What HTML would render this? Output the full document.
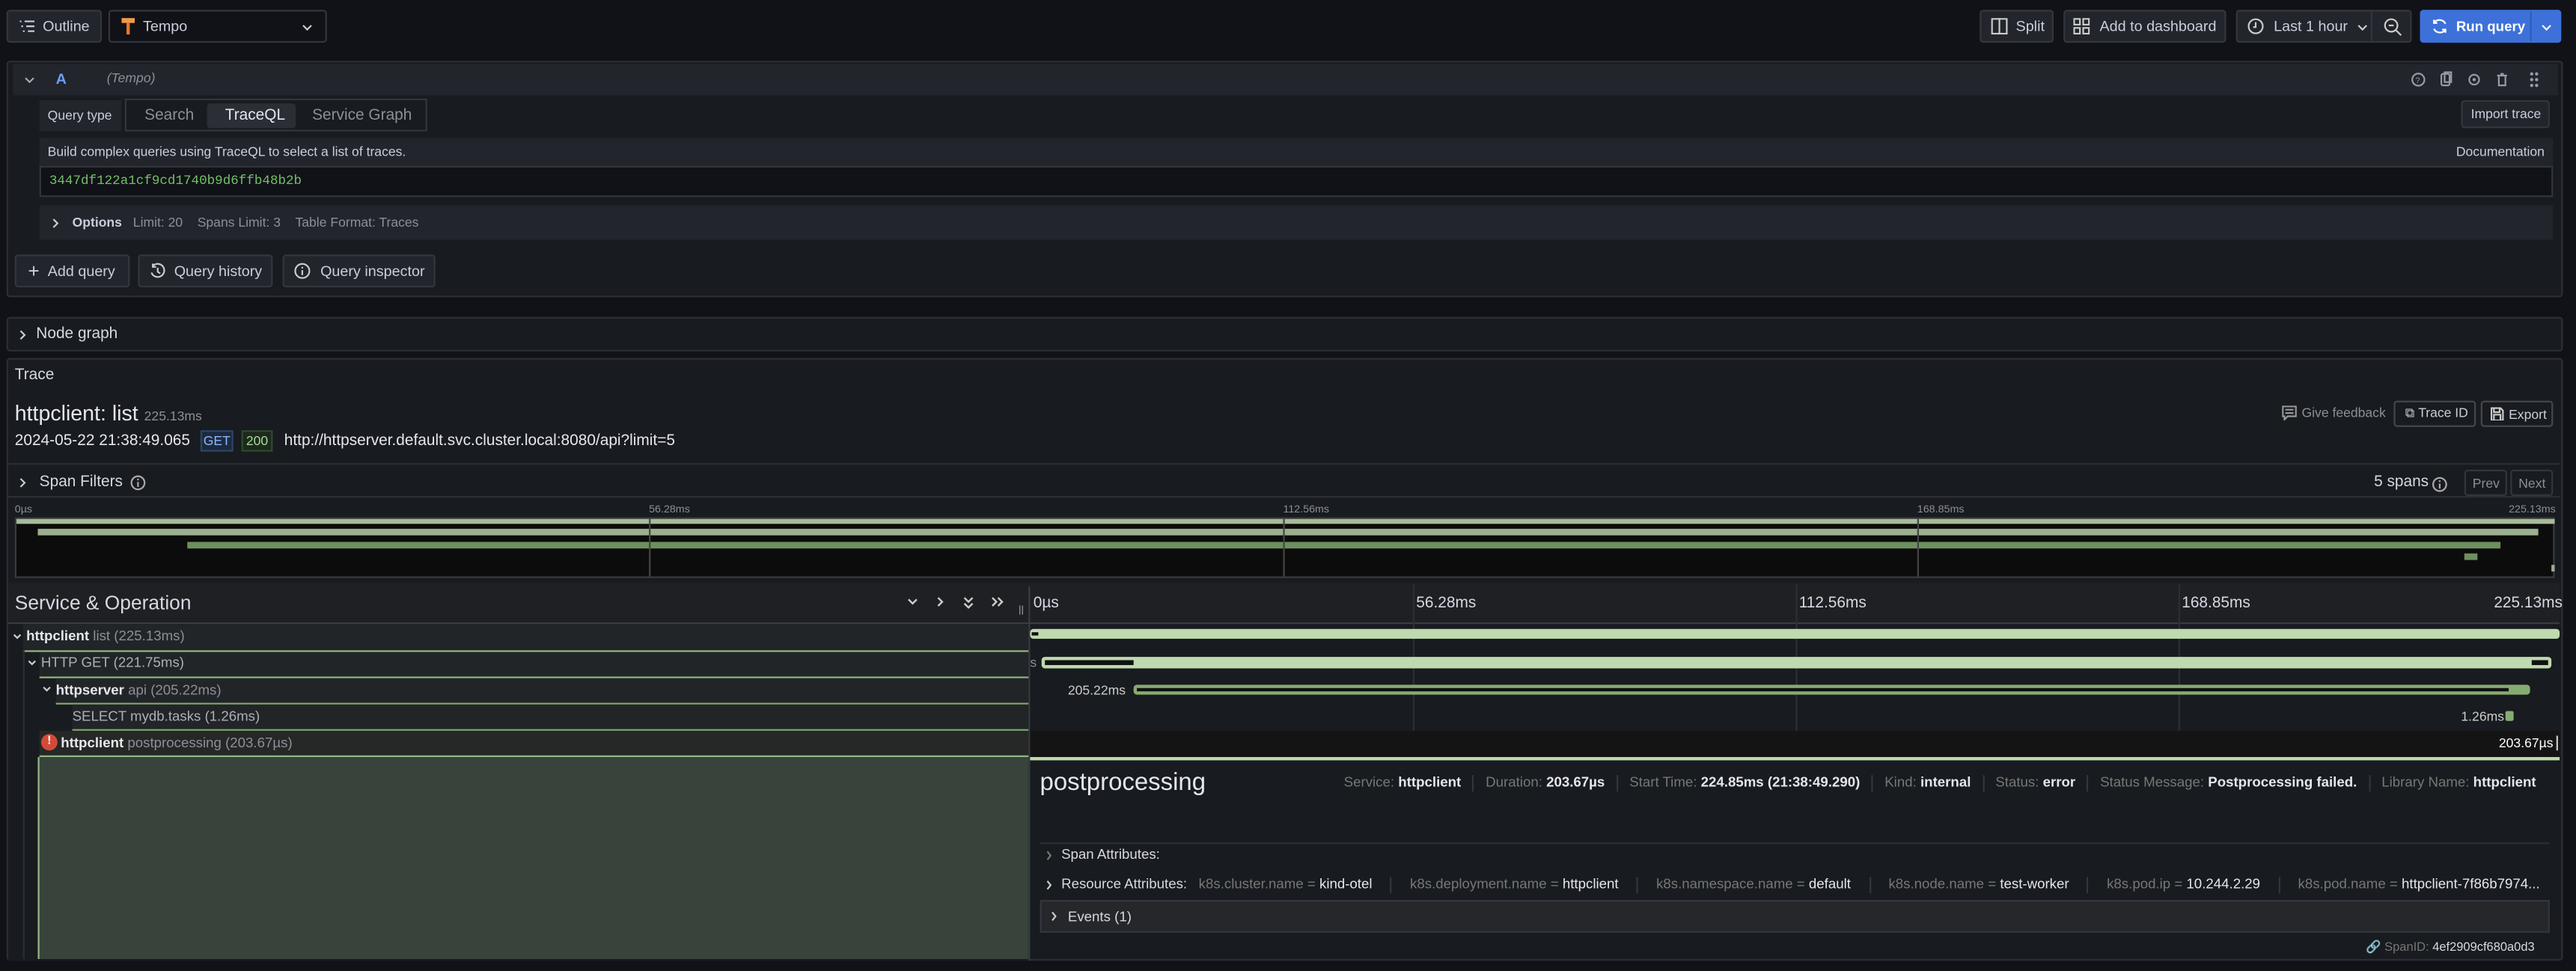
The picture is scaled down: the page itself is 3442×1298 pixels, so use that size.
<!DOCTYPE html>
<html><head><meta charset="utf-8">
<style>
html,body{margin:0;padding:0;background:#111217;width:3442px;height:1298px;overflow:hidden}
#w{position:absolute;left:0;top:0;width:1568px;height:591px;transform:scale(2.1952);transform-origin:0 0;font-family:"Liberation Sans",sans-serif;color:#ccccdc;font-size:9px}
.a{position:absolute;white-space:nowrap}
.btn{position:absolute;background:#22252b;border:1px solid #33363d;border-radius:2px;box-sizing:border-box;color:#ccccdc;font-size:9px;display:flex;align-items:center}
.panel{position:absolute;background:#181b1f;border:1px solid #2c2e33;box-sizing:border-box;border-radius:2px}
.row{position:absolute;background:#22252b}
.dim{color:#8e8e99}
.b{font-weight:bold;color:#e6e6ee}
.tick{position:absolute;width:1px;background:#2c2e33}
.bar{position:absolute;background:#bedaae;border-radius:2px}
.sep{display:inline-block;width:1px;height:10px;background:#33363d;vertical-align:middle;margin:0 7px}
.sep2{display:inline-block;width:1px;height:10px;background:#33363d;vertical-align:middle;margin:0 11px}
</style></head><body><div id="w">

<!-- top bar -->
<div class="btn" style="left:4px;top:6px;width:58px;height:20px;padding-left:7px">
<svg width="9" height="8" viewBox="0 0 9 8" style="margin-right:5px"><path d="M0 1h1M3 1h6M1 4h1M4 4h5M2 7h1M5 7h4" stroke="#ccccdc" stroke-width="1"/></svg>Outline</div>
<div class="btn" style="left:66px;top:6px;width:133px;height:20px;padding-left:6px;background:#111217">
<svg width="10" height="12" viewBox="0 0 10 12" style="margin-right:4px"><rect x="1" y="1" width="8" height="3" fill="#f2994a"/><rect x="4" y="4" width="2" height="7" fill="#e8772e"/></svg>Tempo
<svg class="a" style="right:8px;top:8px" width="6" height="4"><path d="M.5 .5l2.5 2.5 2.5-2.5" stroke="#ccc" fill="none"/></svg></div>

<div class="btn" style="left:1205px;top:6px;width:45px;height:20px;padding-left:6px"><svg width="10" height="10" style="margin-right:5px"><rect x="0.5" y="0.5" width="9" height="9" fill="none" stroke="#ccc"/><path d="M5 0v10" stroke="#ccc"/></svg>Split</div>
<div class="btn" style="left:1256px;top:6px;width:99px;height:20px;padding-left:5px"><svg width="10" height="10" style="margin-right:6px"><rect x=".5" y=".5" width="3.5" height="3.5" fill="none" stroke="#ccc"/><rect x="6" y=".5" width="3.5" height="3.5" fill="none" stroke="#ccc"/><rect x=".5" y="6" width="3.5" height="3.5" fill="none" stroke="#ccc"/><rect x="6" y="6" width="3.5" height="3.5" fill="none" stroke="#ccc"/></svg>Add to dashboard</div>
<div class="btn" style="left:1361px;top:6px;width:107px;height:20px;padding-left:6px"><svg width="10" height="10" style="margin-right:6px"><circle cx="5" cy="5" r="4.3" fill="none" stroke="#ccc"/><path d="M5 2.5v3h-1.5" stroke="#ccc" fill="none"/></svg>Last 1 hour
<svg class="a" style="left:73px;top:8px" width="6" height="4"><path d="M.5 .5l2.5 2.5 2.5-2.5" stroke="#ccc" fill="none"/></svg>
<span class="a" style="left:81px;top:0;width:1px;height:18px;background:#33363d"></span>
<svg class="a" style="left:89px;top:4px" width="11" height="11"><circle cx="4.5" cy="4.5" r="3.8" fill="none" stroke="#ccc"/><path d="M3 4.5h3M7.5 7.5l3 3" stroke="#ccc"/></svg></div>
<div class="btn" style="left:1473px;top:6px;width:86px;height:20px;background:#3d71d9;border-color:#3d71d9;color:#fff;padding-left:6px;font-weight:bold;font-size:8.5px"><svg width="10" height="10" style="margin-right:5px"><path d="M8.5 3.5A4 4 0 0 0 1.5 3M1.5 6.5A4 4 0 0 0 8.5 7M1.5 1v2h2M8.5 9V7h-2" stroke="#fff" fill="none"/></svg>Run query<span class="a" style="left:66px;top:0;width:1px;height:18px;background:#2f5db8"></span><svg class="a" style="left:73px;top:8px" width="6" height="4"><path d="M.5 .5l2.5 2.5 2.5-2.5" stroke="#fff" fill="none"/></svg></div>

<!-- query panel -->
<div class="panel" style="left:4px;top:37px;width:1556px;height:144px;border-color:#2c2e33"></div>
<div class="row" style="left:8px;top:39px;width:1549px;height:19px"></div>
<svg class="a" style="left:15px;top:47px" width="6" height="4"><path d="M.5 .5l2.5 2.5 2.5-2.5" stroke="#aaa" fill="none"/></svg>
<span class="a" style="left:34px;top:43px;color:#6e9fff;font-weight:bold">A</span>
<span class="a dim" style="left:65px;top:43px;font-style:italic;font-size:8px">(Tempo)</span>
<svg class="a" style="left:1467px;top:43px" width="90" height="11" viewBox="0 0 90 11"><circle cx="5" cy="5.5" r="3.7" fill="none" stroke="#9a9aa5"/><text x="3.2" y="7.5" font-size="5" fill="#9a9aa5" font-family="Liberation Sans">?</text><rect x="19" y="2" width="5" height="7" rx="1" fill="none" stroke="#9a9aa5"/><rect x="21" y="1" width="4" height="6" fill="none" stroke="#9a9aa5"/><circle cx="39" cy="5.5" r="3" fill="none" stroke="#9a9aa5"/><circle cx="39" cy="5.5" r="1" fill="#9a9aa5"/><path d="M53 3h6M55 2h2M54 3v6h4v-6" fill="none" stroke="#9a9aa5"/><g fill="#9a9aa5"><circle cx="74" cy="2" r="1"/><circle cx="77" cy="2" r="1"/><circle cx="74" cy="5.5" r="1"/><circle cx="77" cy="5.5" r="1"/><circle cx="74" cy="9" r="1"/><circle cx="77" cy="9" r="1"/></g></svg>

<div class="row" style="left:24px;top:61px;width:50px;height:19px"></div>
<span class="a" style="left:29px;top:66px;font-size:8px;color:#ccccdc">Query type</span>
<div class="a" style="left:76px;top:60px;width:184px;height:20px;border:1px solid #33363d;box-sizing:border-box"></div>
<div class="a" style="left:126px;top:63px;width:54px;height:15px;background:#2b2e35;border-radius:2px"></div>
<span class="a dim" style="left:88px;top:65px;font-size:9.5px">Search</span>
<span class="a" style="left:137px;top:65px;font-size:9.5px;color:#e6e6ee">TraceQL</span>
<span class="a dim" style="left:190px;top:65px;font-size:9.5px">Service Graph</span>
<div class="btn" style="left:1498px;top:61px;width:54px;height:17px;padding-left:5px;font-size:8px">Import trace</div>

<div class="row" style="left:24px;top:84px;width:1530px;height:17px"></div>
<span class="a" style="left:29px;top:88px;font-size:8px">Build complex queries using TraceQL to select a list of traces.</span>
<span class="a" style="left:1495px;top:88px;font-size:8px">Documentation</span>
<div class="a" style="left:24px;top:101px;width:1530px;height:19px;background:#111217;border:1px solid #33363d;box-sizing:border-box"></div>
<span class="a" style="left:30px;top:106px;font-family:'Liberation Mono',monospace;font-size:8px;color:#73bf69">3447df122a1cf9cd1740b9d6ffb48b2b</span>

<div class="row" style="left:24px;top:125px;width:1530px;height:21px"></div>
<svg class="a" style="left:32px;top:133px" width="4" height="6"><path d="M.5 .5l2.5 2.5-2.5 2.5" stroke="#ccc" fill="none"/></svg>
<span class="a" style="left:44px;top:131px;font-size:8px;font-weight:bold">Options</span>
<span class="a dim" style="left:81px;top:131px;font-size:8px">Limit: 20&nbsp;&nbsp;&nbsp;&nbsp;Spans Limit: 3&nbsp;&nbsp;&nbsp;&nbsp;Table Format: Traces</span>

<div class="btn" style="left:9px;top:155px;width:70px;height:20px;padding-left:7px"><span style="font-size:12px;margin-right:5px">+</span>Add query</div>
<div class="btn" style="left:84px;top:155px;width:82px;height:20px;padding-left:6px"><svg width="10" height="10" style="margin-right:5px"><path d="M2 2A4 4 0 1 1 1.2 6M2 .5V2.5H4M5 3v2.5l1.5 1" stroke="#ccc" fill="none"/></svg>Query history</div>
<div class="btn" style="left:172px;top:155px;width:93px;height:20px;padding-left:6px"><svg width="10" height="10" style="margin-right:6px"><circle cx="5" cy="5" r="4.3" fill="none" stroke="#ccc"/><path d="M5 4.5v3M5 2.5v1" stroke="#ccc"/></svg>Query inspector</div>

<!-- node graph -->
<div class="panel" style="left:4px;top:193px;width:1556px;height:21px"></div>
<svg class="a" style="left:12px;top:201px" width="4" height="6"><path d="M.5 .5l2.5 2.5-2.5 2.5" stroke="#ccc" fill="none"/></svg>
<span class="a" style="left:22px;top:198px;font-size:9.5px;color:#d8d8e4">Node graph</span>

<!-- trace panel -->
<div class="panel" style="left:4px;top:218px;width:1556px;height:367px"></div>
<span class="a" style="left:9px;top:223px;font-size:9.5px;color:#d8d8e4">Trace</span>
<span class="a" style="left:9px;top:244px;font-size:13px;color:#e6e6ee">httpclient: list <span class="dim" style="font-size:8px">225.13ms</span></span>
<span class="a" style="left:9px;top:263px;font-size:9.5px;color:#e6e6ee">2024-05-22 21:38:49.065</span>
<span class="a" style="left:122px;top:262px;width:20px;height:13px;background:#1d2a3d;border:1px solid #2e4566;box-sizing:border-box;font-size:8px;color:#8ab8ff;text-align:center;line-height:12px">GET</span>
<span class="a" style="left:147px;top:262px;width:19px;height:13px;background:#1c2a1c;border:1px solid #2f4a2f;box-sizing:border-box;font-size:8px;color:#a6d89a;text-align:center;line-height:12px">200</span>
<span class="a" style="left:173px;top:263px;font-size:9.5px;color:#e6e6ee">http://httpserver.default.svc.cluster.local:8080/api?limit=5</span>
<svg class="a" style="left:1389px;top:247px" width="9" height="9"><path d="M.5 .5h8v6h-5l-2 2v-2h-1z M2 2.5h5M2 4.5h5" stroke="#999" fill="none"/></svg>
<span class="a dim" style="left:1401px;top:247px;font-size:8px">Give feedback</span>
<div class="btn" style="left:1457px;top:244px;width:50px;height:16px;padding-left:6px;font-size:8px;background:transparent;border-color:#44474f">⧉&nbsp;Trace ID</div>
<div class="btn" style="left:1510px;top:244px;width:44px;height:16px;padding-left:5px;font-size:8px;background:transparent;border-color:#44474f"><svg width="8" height="8" style="margin-right:3px"><path d="M.5 .5h5.5l1.5 1.5v6h-7z M2 .5v2.5h3.5v-2.5 M2 7.5v-3h4v3" stroke="#ccc" fill="none"/></svg>Export</div>
<div class="a" style="left:5px;top:282px;width:1553px;height:1px;background:#2c2e33"></div>
<svg class="a" style="left:12px;top:291px" width="4" height="6"><path d="M.5 .5l2.5 2.5-2.5 2.5" stroke="#ccc" fill="none"/></svg>
<span class="a" style="left:24px;top:288px;font-size:9.5px;color:#d8d8e4">Span Filters</span>
<svg class="a" style="left:79px;top:289px" width="10" height="10"><circle cx="5" cy="5" r="4" fill="none" stroke="#aaa"/><path d="M5 4.5v3M5 2.5v1" stroke="#aaa"/></svg>
<span class="a" style="left:1445px;top:288px;font-size:9.5px;color:#d8d8e4">5 spans</span>
<svg class="a" style="left:1480px;top:290px" width="10" height="10"><circle cx="5" cy="5" r="4" fill="none" stroke="#aaa"/><path d="M5 4.5v3M5 2.5v1" stroke="#aaa"/></svg>
<div class="btn" style="left:1500px;top:286px;width:26px;height:16px;padding-left:4px;font-size:8px;background:transparent;color:#8e8e99">Prev</div>
<div class="btn" style="left:1528px;top:286px;width:26px;height:16px;padding-left:4px;font-size:8px;background:transparent;color:#8e8e99">Next</div>
<div class="a" style="left:5px;top:302px;width:1553px;height:1px;background:#2c2e33"></div>

<!-- minimap -->
<span class="a dim" style="left:9px;top:307px;font-size:6.5px">0µs</span>
<span class="a dim" style="left:395px;top:307px;font-size:6.5px">56.28ms</span>
<span class="a dim" style="left:781px;top:307px;font-size:6.5px">112.56ms</span>
<span class="a dim" style="left:1167px;top:307px;font-size:6.5px">168.85ms</span>
<span class="a dim" style="left:1527px;top:307px;font-size:6.5px">225.13ms</span>
<div class="a" style="left:9px;top:315px;width:1546px;height:37px;background:#0c0c0c;border:1px solid #3a3c42;box-sizing:border-box"></div>
<div class="a" style="left:10px;top:316px;width:1545px;height:3px;background:#a6bc98"></div>
<div class="a" style="left:23px;top:322px;width:1522px;height:4px;background:#9ab08f"></div>
<div class="a" style="left:114px;top:330px;width:1408px;height:4px;background:#6e8f5e"></div>
<div class="a" style="left:1500px;top:337px;width:8px;height:4px;background:#6e8f5e"></div>
<div class="a" style="left:1553px;top:344px;width:2px;height:4px;background:#9ab08f"></div>
<div class="tick" style="left:395px;top:316px;height:35px;background:#444"></div>
<div class="tick" style="left:781px;top:316px;height:35px;background:#444"></div>
<div class="tick" style="left:1167px;top:316px;height:35px;background:#444"></div>

<!-- span header -->
<div class="a" style="left:5px;top:355px;width:1553px;height:24px;background:#1f2023;border-bottom:1px solid #3a3c42"></div>
<span class="a" style="left:9px;top:360px;font-size:12px;color:#d8d8e4">Service &amp; Operation</span>
<svg class="a" style="left:552px;top:363px" width="62" height="8" viewBox="0 0 62 8"><g stroke="#ccc" fill="none" stroke-width="1.1"><path d="M1 2l2.5 2.5 2.5-2.5"/><path d="M19 1l2.5 2.5-2.5 2.5"/><path d="M35 1l2.5 2.5 2.5-2.5M35 4.5l2.5 2.5 2.5-2.5"/><path d="M52 1l2.5 2.5-2.5 2.5M55.5 1l2.5 2.5-2.5 2.5"/></g></svg>
<span class="a" style="left:620px;top:369px;font-size:6px;color:#aaa">||</span>
<div class="a" style="left:626px;top:357px;width:1px;height:228px;background:#3a3c42"></div>
<span class="a" style="left:629px;top:362px;font-size:9.5px;color:#d8d8e4">0µs</span>
<span class="a" style="left:862px;top:362px;font-size:9.5px;color:#d8d8e4">56.28ms</span>
<span class="a" style="left:1095px;top:362px;font-size:9.5px;color:#d8d8e4">112.56ms</span>
<span class="a" style="left:1328px;top:362px;font-size:9.5px;color:#d8d8e4">168.85ms</span>
<span class="a" style="left:1518px;top:362px;font-size:9.5px;color:#d8d8e4">225.13ms</span>
<div class="tick" style="left:860px;top:356px;height:105px"></div>
<div class="tick" style="left:1093px;top:356px;height:105px"></div>
<div class="tick" style="left:1326px;top:356px;height:105px"></div>

<!-- rows left -->
<div class="a" style="left:5px;top:380px;width:621px;height:205px;background:#181b1f"></div>
<div class="a" style="left:14px;top:380px;width:612px;height:16px;background:#212527"></div>
<div class="a" style="left:14px;top:396px;width:612px;height:1px;background:#96b886"></div>
<div class="a" style="left:24px;top:397px;width:602px;height:15px;background:#212527"></div>
<div class="a" style="left:24px;top:412px;width:602px;height:1px;background:#96b886"></div>
<div class="a" style="left:34px;top:413px;width:592px;height:15px;background:#212527"></div>
<div class="a" style="left:34px;top:428px;width:592px;height:1px;background:#86ab70"></div>
<div class="a" style="left:44px;top:429px;width:582px;height:15px;background:#212527"></div>
<div class="a" style="left:44px;top:444px;width:582px;height:1px;background:#86ab70"></div>
<div class="a" style="left:24px;top:445px;width:602px;height:16px;background:#252826"></div>
<div class="a" style="left:24px;top:460px;width:602px;height:1px;background:#96b886"></div>
<div class="a" style="left:23px;top:461px;width:603px;height:123px;background:#38433b;border-left:1px solid #96b886;box-sizing:border-box"></div>
<div class="a" style="left:14px;top:396px;width:1px;height:188px;background:#2c2e33"></div>
<svg class="a" style="left:8px;top:386px" width="5" height="4"><path d="M.5 .5l2 2 2-2" stroke="#ccc" fill="none"/></svg>
<span class="a" style="left:16px;top:382px;font-size:8.5px"><b style="color:#e6e6ee">httpclient</b> <span class="dim">list (225.13ms)</span></span>
<svg class="a" style="left:17px;top:402px" width="5" height="4"><path d="M.5 .5l2 2 2-2" stroke="#ccc" fill="none"/></svg>
<span class="a dim" style="left:25px;top:398px;font-size:8.5px;color:#aeaeb8">HTTP GET (221.75ms)</span>
<svg class="a" style="left:26px;top:418px" width="5" height="4"><path d="M.5 .5l2 2 2-2" stroke="#ccc" fill="none"/></svg>
<span class="a" style="left:34px;top:415px;font-size:8.5px"><b style="color:#e6e6ee">httpserver</b> <span class="dim">api (205.22ms)</span></span>
<span class="a" style="left:44px;top:431px;font-size:8.5px;color:#aeaeb8">SELECT mydb.tasks (1.26ms)</span>
<span class="a" style="left:25px;top:447px;width:10px;height:10px;border-radius:50%;background:#d44a3a;color:#fff;font-size:7px;text-align:center;line-height:10px;font-weight:bold">!</span>
<span class="a" style="left:37px;top:447px;font-size:8.5px"><b style="color:#e6e6ee">httpclient</b> <span class="dim">postprocessing (203.67µs)</span></span>

<!-- bars -->
<div class="bar" style="left:627px;top:383px;width:931px;height:6px"></div>
<div class="a" style="left:628px;top:385px;width:4px;height:2px;background:#111"></div>
<span class="a dim" style="left:627px;top:399px;font-size:8px">s</span>
<div class="bar" style="left:634px;top:400px;width:919px;height:7px"></div>
<div class="a" style="left:636px;top:402px;width:54px;height:3px;background:#111"></div>
<div class="a" style="left:1541px;top:402px;width:10px;height:3px;background:#111"></div>
<span class="a" style="left:650px;top:416px;font-size:8px;color:#ccc">205.22ms</span>
<div class="bar" style="left:690px;top:417px;width:850px;height:6px;background:#86ab70"></div>
<div class="a" style="left:692px;top:419px;width:835px;height:2px;background:#111"></div>
<span class="a" style="left:1498px;top:432px;font-size:8px;color:#ccc">1.26ms</span>
<div class="a" style="left:1525px;top:433px;width:5px;height:6px;background:#86ab70;border-radius:1px"></div>
<div class="a" style="left:627px;top:445px;width:931px;height:16px;background:#141414"></div>
<span class="a" style="left:1521px;top:448px;font-size:8px;color:#fff">203.67µs</span>
<div class="a" style="left:1556px;top:448px;width:1px;height:9px;background:#ccc"></div>
<div class="a" style="left:627px;top:461px;width:931px;height:2px;background:#bedaae"></div>

<!-- detail -->
<span class="a" style="left:633px;top:468px;font-size:15px;color:#e6e6ee">postprocessing</span>
<span class="a" style="left:818px;top:471px;font-size:8.5px;color:#777"><span>Service: <b style="color:#e6e6ee">httpclient</b></span><span class="sep"></span>Duration: <b style="color:#e6e6ee">203.67µs</b><span class="sep"></span>Start Time: <b style="color:#e6e6ee">224.85ms (21:38:49.290)</b><span class="sep"></span>Kind: <b style="color:#e6e6ee">internal</b><span class="sep"></span>Status: <b style="color:#e6e6ee">error</b><span class="sep"></span>Status Message: <b style="color:#e6e6ee">Postprocessing failed.</b><span class="sep"></span>Library Name: <b style="color:#e6e6ee">httpclient</b></span>
<div class="a" style="left:633px;top:513px;width:919px;height:1px;background:#2c2e33"></div>
<svg class="a" style="left:637px;top:518px" width="4" height="6"><path d="M.5 .5l2 2.5-2 2.5" stroke="#777" fill="none"/></svg>
<span class="a" style="left:646px;top:515px;font-size:8.5px;color:#d8d8e4">Span Attributes:</span>
<svg class="a" style="left:637px;top:536px" width="4" height="6"><path d="M.5 .5l2 2.5-2 2.5" stroke="#ccc" fill="none"/></svg>
<span class="a" style="left:646px;top:533px;font-size:8.5px;color:#777"><span style="color:#d8d8e4">Resource Attributes:</span>&nbsp;&nbsp; k8s.cluster.name = <span style="color:#e6e6ee">kind-otel</span><span class="sep2"></span>k8s.deployment.name = <span style="color:#e6e6ee">httpclient</span><span class="sep2"></span>k8s.namespace.name = <span style="color:#e6e6ee">default</span><span class="sep2"></span>k8s.node.name = <span style="color:#e6e6ee">test-worker</span><span class="sep2"></span>k8s.pod.ip = <span style="color:#e6e6ee">10.244.2.29</span><span class="sep2"></span>k8s.pod.name = <span style="color:#e6e6ee">httpclient-7f86b7974...</span></span>
<div class="a" style="left:633px;top:548px;width:919px;height:20px;background:#26272a;border:1px solid #33363d;box-sizing:border-box"></div>
<svg class="a" style="left:640px;top:555px" width="4" height="6"><path d="M.5 .5l2 2.5-2 2.5" stroke="#ccc" fill="none"/></svg>
<span class="a" style="left:650px;top:553px;font-size:8.5px;color:#d8d8e4">Events (1)</span>
<span class="a" style="left:1440px;top:572px;font-size:7.5px;color:#777">🔗 SpanID: <span style="color:#d8d8e4">4ef2909cf680a0d3</span></span>
</div></body></html>
